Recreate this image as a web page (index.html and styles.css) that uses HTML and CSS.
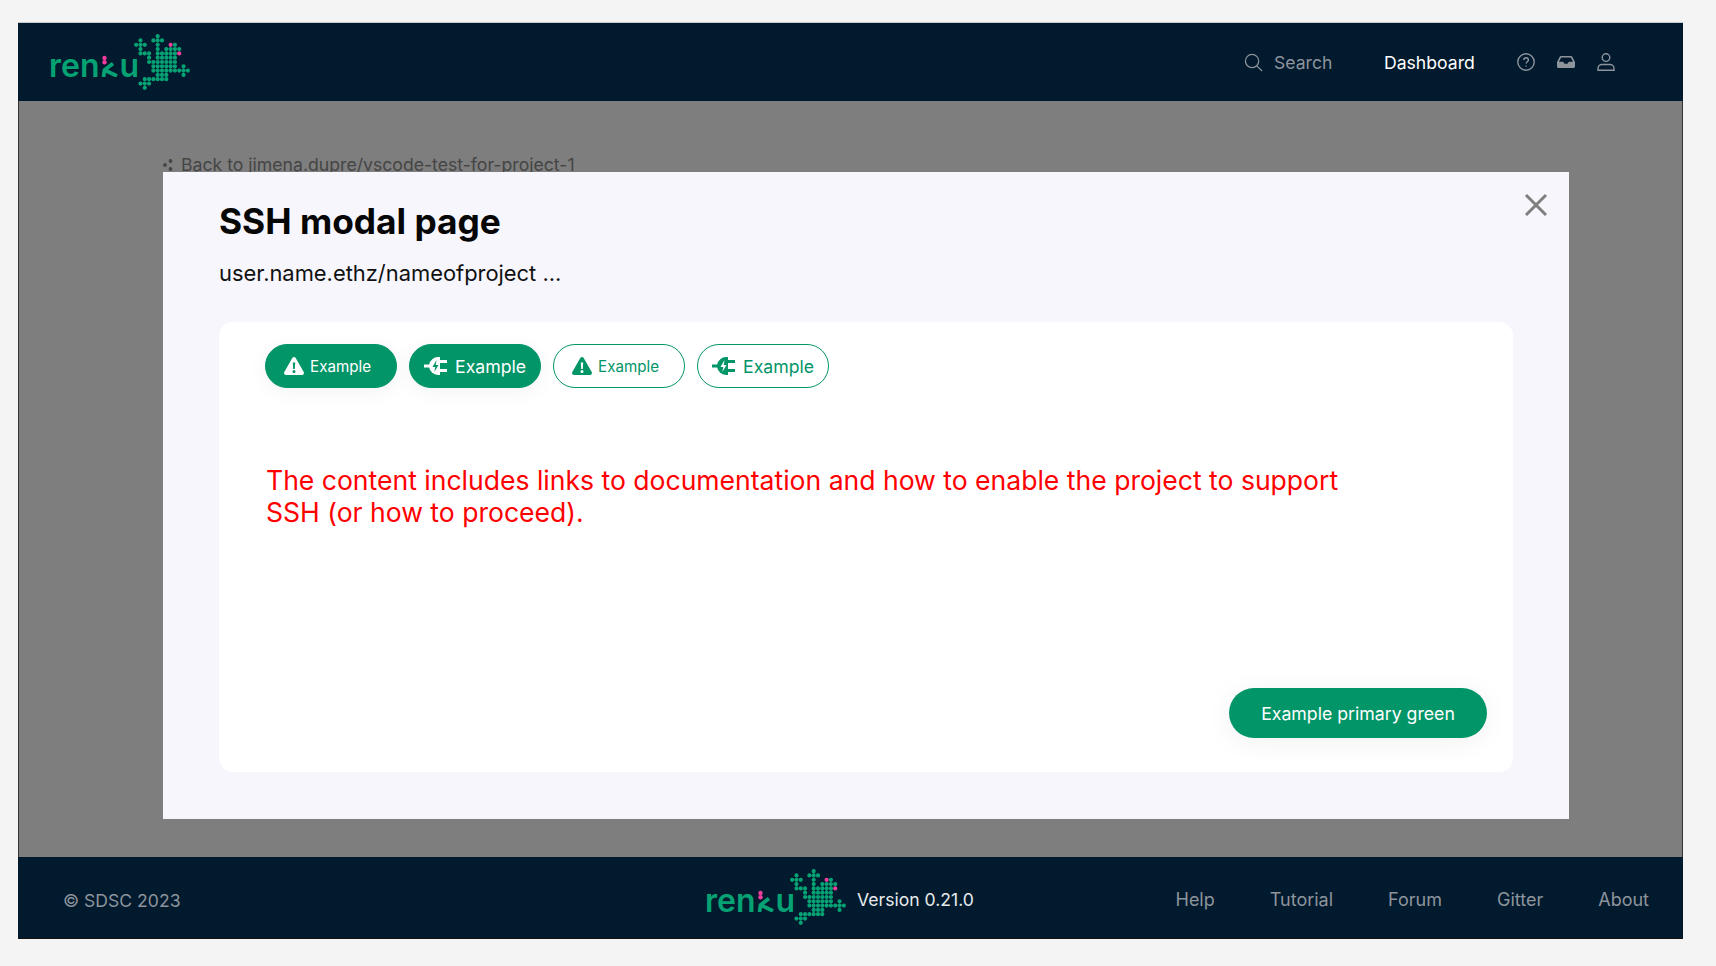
FILE: index.html
```html
<!DOCTYPE html>
<html lang="en">
<head>
    <meta charset="UTF-8">
    <meta name="viewport" content="width=device-width, initial-scale=1.0">
    <title>SSH modal page - Renku</title>
    <link rel="stylesheet" href="styles.css">
</head>
<body>
    <svg class="defs" width="0" height="0">
        <symbol id="frog" viewBox="-0.5 -0.5 13 13">
            <path class="frog-dots" d="M5 0h0M1 1h0M4 1h0M5 1h0M6 1h0M0 2h0M1 2h0M2 2h0M5 2h0M9 2h0M1 3h0M5 3h0M7 3h0M8 3h0M9 3h0M10 3h0M1 4h0M2 4h0M3 4h0M5 4h0M6 4h0M7 4h0M8 4h0M9 4h0M3 5h0M5 5h0M6 5h0M7 5h0M8 5h0M9 5h0M3 6h0M4 6h0M5 6h0M6 6h0M7 6h0M8 6h0M9 6h0M4 7h0M5 7h0M6 7h0M7 7h0M8 7h0M9 7h0M11 7h0M4 8h0M5 8h0M6 8h0M7 8h0M8 8h0M9 8h0M10 8h0M11 8h0M12 8h0M5 9h0M6 9h0M7 9h0M11 9h0M2 10h0M3 10h0M4 10h0M5 10h0M6 10h0M7 10h0M1 11h0M2 11h0M3 11h0M2 12h0"/>
            <path class="frog-eyes" d="M8 2h0M10 4h0"/>
        </symbol>
        <symbol id="k-mark" viewBox="0 0 20 24">
            <path class="k-arm" d="M12 10.500 3.500 17 2.500 24M3.500 17 16 23"/>
            <circle class="k-dot" cx="3.500" cy="5" r="2.200"/>
            <circle class="k-dot" cx="3.500" cy="9.300" r="2.200"/>
        </symbol>
        <symbol id="warn" viewBox="0 0 20 18">
            <path fill-rule="evenodd" d="M10 0c.7 0 1.300.4 1.700 1l8 14c.7 1.300-.2 3-1.700 3H2c-1.500 0-2.400-1.700-1.700-3l8-14c.4-.6 1-1 1.700-1zM8.800 5.500l.4 6.500h1.600l.4-6.500zM10 13a1.500 1.500 0 1 0 0 3 1.500 1.500 0 0 0 0-3z"/>
        </symbol>
        <symbol id="plug" viewBox="0 0 24 20">
            <path fill-rule="evenodd" d="M0 8.500h5.200A9 9 0 0 1 14 1h2v3h7v3h-7v6h7v3h-7v3h-2a9 9 0 0 1-8.800-7.500H0zM12.500 4 8.500 11h2.800l-1 5 4.200-7h-2.800z"/>
        </symbol>
    </svg>

    <div class="frame">
        <header class="topbar">
            <a class="logo">
                <span class="logo-word">ren<svg class="logo-k"><use href="#k-mark"/></svg>u</span>
                <svg class="logo-frog"><use href="#frog"/></svg>
            </a>
            <nav class="topnav">
                <span class="search">
                    <svg class="icon-search" viewBox="0 0 20 20"><circle cx="8.500" cy="8.500" r="7"/><path d="M13.500 13.500 19 19"/></svg>
                    Search
                </span>
                <span class="dash-link">Dashboard</span>
                <span class="nav-icons">
                    <svg class="nav-icon" viewBox="0 0 18 18"><circle cx="9" cy="9" r="8.200"/><path d="M6.800 7c0-3 4.600-3 4.600 0 0 1.800-2.300 1.800-2.300 3.600M9.100 12.600v.9"/></svg>
                    <svg class="nav-icon inbox" viewBox="0 0 18 12"><path d="M4 0h10c.6 0 1 .3 1.300.8L18 6v4.500c0 .8-.7 1.500-1.500 1.500h-15C.7 12 0 11.300 0 10.500V6L2.700.8C3 .3 3.400 0 4 0zm.2 1.500L2 5.800h4.200L7.500 7.800h3l1.300-2H16l-2.200-4.300z"/></svg>
                    <svg class="nav-icon" viewBox="0 0 18 18"><circle cx="9" cy="4.600" r="3.800"/><path d="M1 17.300v-1.800c0-2.500 2-4 4-4h8c2 0 4 1.500 4 4v1.800z"/></svg>
                </span>
            </nav>
        </header>

        <main class="page">
            <div class="back-link">
                <svg class="back-icon" viewBox="0 0 10 12"><circle cx="7.500" cy="2" r="1.900"/><circle cx="2" cy="6" r="1.900"/><circle cx="7.500" cy="10" r="1.900"/></svg>
                Back to jimena.dupre/vscode-test-for-project-1
            </div>

            <section class="modal">
                <svg class="close" viewBox="0 0 24 24"><path d="M2 2 22 22M22 2 2 22"/></svg>
                <h1 class="modal-title">SSH modal page</h1>
                <p class="modal-sub">user.name.ethz/nameofproject ...</p>

                <div class="modal-card">
                    <div class="btn-row">
                        <button class="pill pill-solid"><svg class="pill-warn"><use href="#warn"/></svg>Example</button>
                        <button class="pill pill-solid pill-big"><svg class="pill-plug"><use href="#plug"/></svg>Example</button>
                        <button class="pill pill-outline"><svg class="pill-warn"><use href="#warn"/></svg>Example</button>
                        <button class="pill pill-outline pill-big"><svg class="pill-plug"><use href="#plug"/></svg>Example</button>
                    </div>
                    <p class="note">The content includes links to documentation and how to enable the project to support SSH (or how to proceed).</p>
                    <button class="primary">Example primary green</button>
                </div>
            </section>
        </main>

        <footer class="footer">
            <span class="copyright">© SDSC 2023</span>
            <span class="footer-mid">
                <a class="logo">
                    <span class="logo-word">ren<svg class="logo-k"><use href="#k-mark"/></svg>u</span>
                    <svg class="logo-frog"><use href="#frog"/></svg>
                </a>
                <span class="version">Version 0.21.0</span>
            </span>
            <nav class="footer-links">
                <span>Help</span>
                <span>Tutorial</span>
                <span>Forum</span>
                <span>Gitter</span>
                <span>About</span>
            </nav>
        </footer>
    </div>
</body>
</html>
```

FILE: styles.css
```css
* {
    box-sizing: border-box;
}
body {
    margin: 0;
    height: 966px;
    padding: 22px 33px 27px 18px;
    background: #f4f4f4;
    font-family: Inter, "Noto Sans", sans-serif;
    font-size: 17.600px;
    overflow: hidden;
}
.defs {
    position: absolute;
}
.frame {
    display: flex;
    flex-direction: column;
    height: 917px;
    border-top: 1px solid #c8c8c8;
    border-bottom: 1px solid #111;
}

/* logo */
.logo {
    display: flex;
    align-items: flex-start;
    width: 142px;
    height: 57px;
    flex-shrink: 0;
}
.logo-word {
    display: flex;
    align-items: baseline;
    flex: 0 0 85px;
    min-width: 0;
    margin-top: 13px;
    font-size: 32px;
    font-weight: 600;
    line-height: 38px;
    color: #06a274;
}
.logo-k {
    width: 20px;
    height: 24px;
    margin: 0 -1px 0 1px;
    flex-shrink: 0;
}
.logo-frog {
    width: 56px;
    height: 56px;
    flex-shrink: 0;
}
.frog-dots {
    fill: none;
    stroke: #06a274;
    stroke-width: .98;
    stroke-linecap: round;
}
.frog-eyes {
    fill: none;
    stroke: #f03c9c;
    stroke-width: .98;
    stroke-linecap: round;
}
.k-arm {
    fill: none;
    stroke: #06a274;
    stroke-width: 3.800;
}
.k-dot {
    fill: #f03c9c;
}

/* top bar */
.topbar {
    display: flex;
    align-items: center;
    justify-content: space-between;
    height: 78px;
    padding: 0 67px 0 30px;
    background: #011a2e;
    border: solid #011a2e;
    border-width: 0 1px;
}
.topnav {
    display: flex;
    align-items: center;
}
.search {
    display: flex;
    align-items: center;
    gap: 11px;
    width: 140px;
    color: #8d949c;
}
.icon-search {
    width: 19px;
    height: 19px;
    fill: none;
    stroke: #8d949c;
    stroke-width: 1.300;
}
.dash-link {
    width: 91px;
    color: #fff;
}
.nav-icons {
    display: flex;
    align-items: center;
    gap: 22px;
    margin-left: 42px;
}
.nav-icon {
    width: 18px;
    height: 18px;
    fill: none;
    stroke: #8d949c;
    stroke-width: 1.400;
}
.nav-icon.inbox {
    height: 12px;
    fill: #8d949c;
    stroke: none;
}

/* dimmed page behind modal */
.page {
    position: relative;
    flex: 1;
    padding: 53px 0 0 144px;
    background: #7e7e7e;
    border: solid #333;
    border-width: 0 1px;
}
.back-link {
    display: flex;
    align-items: center;
    gap: 8px;
    font-size: 17.650px;
    line-height: 22px;
    color: #454545;
}
.back-icon {
    width: 10px;
    height: 12px;
    fill: #454545;
}

/* modal */
.modal {
    position: absolute;
    top: 71px;
    left: 144px;
    display: flex;
    flex-direction: column;
    width: 1406px;
    height: 647px;
    padding: 29px 56px 47px;
    background: #f6f6fc;
}
.close {
    position: absolute;
    top: 21px;
    right: 21px;
    width: 24px;
    height: 24px;
    fill: none;
    stroke: #7f7f7f;
    stroke-width: 3;
}
.modal-title {
    margin: 0;
    font-size: 35.300px;
    font-weight: 700;
    line-height: 42px;
    color: #060606;
}
.modal-sub {
    margin: 15px 0 34px;
    font-size: 21.900px;
    line-height: 30px;
    color: #111;
}
.modal-card {
    display: flex;
    flex-direction: column;
    flex: 1;
    padding: 22px 26px 34px 46px;
    background: #fff;
    border-radius: 14px;
}
.btn-row {
    display: flex;
    gap: 12px;
}
.pill {
    display: flex;
    align-items: center;
    gap: 6px;
    width: 132px;
    height: 44px;
    padding: 0 0 0 18px;
    border: 1px solid #029568;
    border-radius: 22px;
    font-family: inherit;
    font-size: 15.200px;
}
.pill-big {
    gap: 7px;
    padding-left: 14px;
    font-size: 17.700px;
}
.pill-solid {
    background: #029568;
    color: #fff;
    fill: #fff;
    box-shadow: 0 4px 20px rgba(0, 0, 0, .05);
}
.pill-outline {
    background: #fff;
    color: #029568;
    fill: #029568;
}
.pill-warn {
    width: 20px;
    height: 18px;
}
.pill-plug {
    width: 24px;
    height: 20px;
}
.note {
    max-width: 1085px;
    margin: 76px 0 0 1px;
    font-size: 26.560px;
    line-height: 32px;
    color: #ff0000;
}
.primary {
    align-self: flex-end;
    width: 258px;
    height: 50px;
    margin-top: auto;
    background: #029568;
    border: none;
    border-radius: 25px;
    box-shadow: 0 4px 28px rgba(0, 0, 0, .06);
    font-family: inherit;
    font-size: 17.700px;
    color: #fff;
}

/* footer */
.footer {
    display: flex;
    align-items: center;
    height: 81px;
    padding: 0 34px 0 45px;
    background: #011a2e;
    color: #8d949c;
}
.copyright {
    flex: 0 0 642px;
    margin-top: 6px;
}
.footer-mid {
    display: flex;
    align-items: center;
    gap: 10px;
}
.version {
    margin-top: 4px;
    color: #e8eaec;
}
.footer-links {
    display: flex;
    gap: 55px;
    margin: 4px 0 0 auto;
    font-size: 18px;
}
```
